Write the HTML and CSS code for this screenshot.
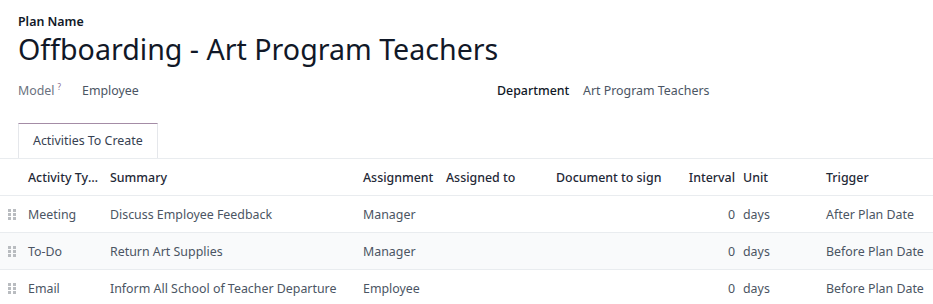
FILE: index.html
```html
<!DOCTYPE html>
<html lang="en">
<head>
  <meta charset="UTF-8">
  <meta name="viewport" content="width=device-width, initial-scale=1.0">
  <link rel="stylesheet" href="styles.css">
  <title>Offboarding - Art Program Teachers</title>
</head>
<body>
  <div class="sheet">
    <div class="title-block">
      <div class="label-name">Plan Name</div>
      <h1>Offboarding - Art Program Teachers</h1>
    </div>
    <div class="fields">
      <div class="field">
        <span class="field-label muted">Model<sup class="help">?</sup></span>
        <span class="field-value">Employee</span>
      </div>
      <div class="field">
        <span class="field-label">Department</span>
        <span class="field-value">Art Program Teachers</span>
      </div>
    </div>
    <div class="tabs">
      <div class="tab active">Activities To Create</div>
    </div>
  </div>

  <table class="list">
    <colgroup>
      <col style="width:24px">
      <col style="width:82px">
      <col style="width:253px">
      <col style="width:83px">
      <col style="width:110px">
      <col style="width:127px">
      <col style="width:60px">
      <col style="width:83px">
      <col style="width:111px">
    </colgroup>
    <thead>
      <tr>
        <th></th>
        <th>Activity Type</th>
        <th>Summary</th>
        <th>Assignment</th>
        <th>Assigned to</th>
        <th>Document to sign</th>
        <th class="num">Interval</th>
        <th>Unit</th>
        <th>Trigger</th>
      </tr>
    </thead>
    <tbody>
      <tr>
        <td class="handle"><svg width="8" height="11" viewBox="0 0 8 11"><g fill="#b9bcc0"><rect x="0" y="0" width="3" height="3"/><rect x="5" y="0" width="3" height="3"/><rect x="0" y="4" width="3" height="3"/><rect x="5" y="4" width="3" height="3"/><rect x="0" y="8" width="3" height="3"/><rect x="5" y="8" width="3" height="3"/></g></svg></td>
        <td>Meeting</td>
        <td>Discuss Employee Feedback</td>
        <td>Manager</td>
        <td></td>
        <td></td>
        <td class="num">0</td>
        <td>days</td>
        <td>After Plan Date</td>
      </tr>
      <tr class="alt">
        <td class="handle"><svg width="8" height="11" viewBox="0 0 8 11"><g fill="#b9bcc0"><rect x="0" y="0" width="3" height="3"/><rect x="5" y="0" width="3" height="3"/><rect x="0" y="4" width="3" height="3"/><rect x="5" y="4" width="3" height="3"/><rect x="0" y="8" width="3" height="3"/><rect x="5" y="8" width="3" height="3"/></g></svg></td>
        <td>To-Do</td>
        <td>Return Art Supplies</td>
        <td>Manager</td>
        <td></td>
        <td></td>
        <td class="num">0</td>
        <td>days</td>
        <td>Before Plan Date</td>
      </tr>
      <tr>
        <td class="handle"><svg width="8" height="11" viewBox="0 0 8 11"><g fill="#b9bcc0"><rect x="0" y="0" width="3" height="3"/><rect x="5" y="0" width="3" height="3"/><rect x="0" y="4" width="3" height="3"/><rect x="5" y="4" width="3" height="3"/><rect x="0" y="8" width="3" height="3"/><rect x="5" y="8" width="3" height="3"/></g></svg></td>
        <td>Email</td>
        <td>Inform All School of Teacher Departure</td>
        <td>Employee</td>
        <td></td>
        <td></td>
        <td class="num">0</td>
        <td>days</td>
        <td>Before Plan Date</td>
      </tr>
    </tbody>
  </table>
</body>
</html>
```

FILE: styles.css
```css
body {
  margin: 0;
  background: #fff;
  font-family: "Noto Sans", Arial, sans-serif;
  font-size: 12.4px;
  color: #374151;
}

.sheet {
  padding: 13px 18px 0 18px;
}

.label-name {
  font-size: 12.4px;
  font-weight: 600;
  color: #111827;
  line-height: 18px;
}

h1 {
  margin: 0;
  font-size: 28.6px;
  font-weight: 400;
  color: #111827;
  line-height: 36px;
}

.fields {
  display: grid;
  grid-template-columns: 479px 1fr;
  margin-top: 15px;
  line-height: 18px;
}

.field {
  display: flex;
}

.field-label {
  width: 64px;
  color: #111827;
  font-weight: 500;
}

.field:nth-child(2) .field-label {
  width: 86px;
}

.field-label.muted {
  color: #6b7280;
  font-weight: 400;
}

.help {
  font-size: 8px;
  line-height: 0;
  color: #8a6d90;
  margin-left: 3px;
  vertical-align: 5px;
}

.field-value {
  color: #4b5563;
}

.tabs {
  display: flex;
  margin-top: 23px;
}

.tab {
  height: 34px;
  padding: 0 14px;
  line-height: 34px;
  white-space: nowrap;
  border: 1px solid #e5e7eb;
  border-top-color: #a48ca6;
  border-bottom: none;
  color: #374151;
}

.list {
  width: 933px;
  border-collapse: collapse;
  table-layout: fixed;
}

.list th,
.list td {
  padding: 0 4px;
  text-align: left;
  white-space: nowrap;
  overflow: hidden;
  text-overflow: ellipsis;
  border-top: 1px solid #e9ecef;
}

.list th {
  height: 36px;
  font-weight: 500;
  color: #1f2937;
}

.list td {
  height: 36px;
  color: #4b5563;
}

.list .num {
  text-align: right;
}

.list .handle {
  padding-left: 8px;
  line-height: 0;
}

.list tr.alt td {
  background: #f9fafb;
}
```
